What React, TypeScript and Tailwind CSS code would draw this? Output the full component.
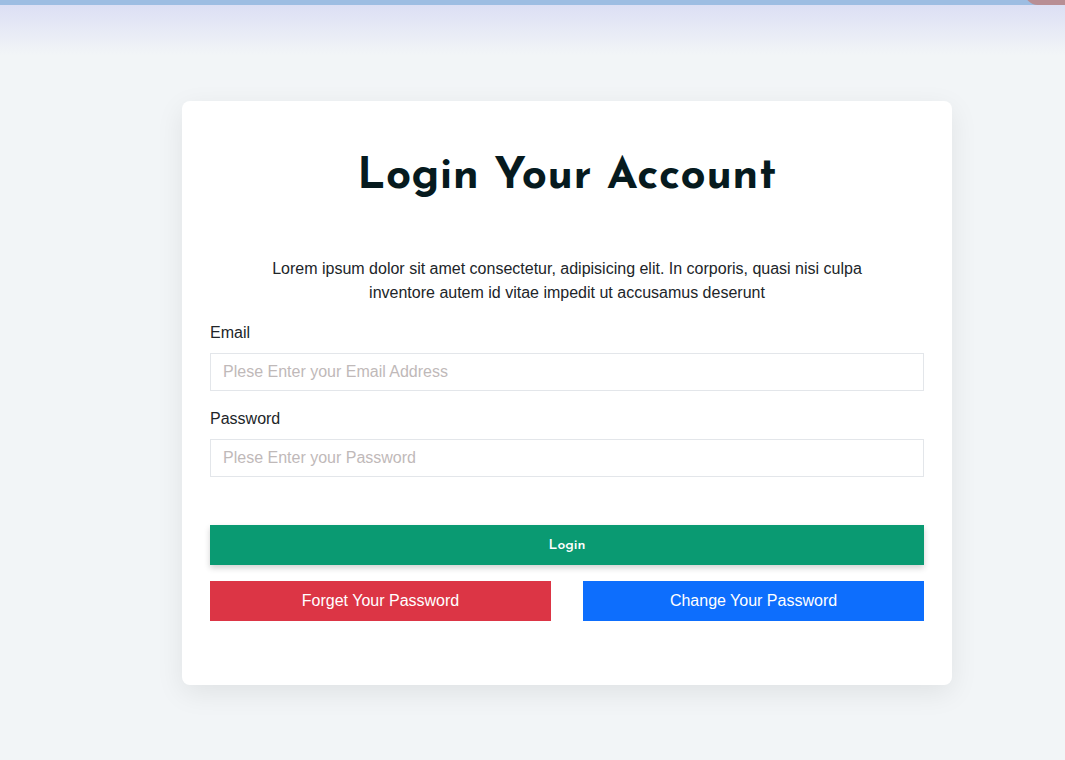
export default function App() {
  return (
    <div
      className="min-h-screen bg-[#f2f5f7] flex flex-col"
      style={{ fontFamily: '"Liberation Sans", Arial, sans-serif' }}
    >
      <div className="relative h-[5px] bg-[#9dbde2] overflow-hidden">
        <div className="absolute right-[-20px] top-[-20px] w-[60px] h-[25px] rounded-full bg-[#b88e94]" />
      </div>
      <div className="h-[50px] bg-gradient-to-b from-[#dcdff4] to-[#f2f5f7]" />

      <div className="flex pl-[182px] pt-[46px] pb-[75px]">
        <div className="w-[770px] bg-white rounded-lg shadow-[0_8px_28px_rgba(0,0,0,0.08)] px-[28px] pt-[50px] pb-[64px]">
          <h1
            className="text-center text-[44px] leading-[52px] font-bold text-[#061a1e] tracking-[0.5px]"
            style={{ fontFamily: '"Josefin Sans", Lato, "Open Sans", sans-serif' }}
          >
            Login Your Account
          </h1>

          <p className="mt-[54px] mx-auto max-w-[600px] text-center text-[16px] leading-[24px] text-[#212529]">
            Lorem ipsum dolor sit amet consectetur, adipisicing elit. In corporis, quasi nisi culpa
            inventore autem id vitae impedit ut accusamus deserunt
          </p>

          <form className="mt-[16px]" onSubmit={(e) => e.preventDefault()}>
            <label className="block text-[16px] leading-[24px] text-[#212529]">Email</label>
            <input
              type="email"
              placeholder="Plese Enter your Email Address"
              className="mt-[8px] block w-full h-[38px] border border-[#e3e6ea] px-[12px] text-[16px] text-[#212529] placeholder:text-[#bfb9b9] outline-none"
            />

            <label className="block mt-[16px] text-[16px] leading-[24px] text-[#212529]">Password</label>
            <input
              type="password"
              placeholder="Plese Enter your Password"
              className="mt-[8px] block w-full h-[38px] border border-[#e3e6ea] px-[12px] text-[16px] text-[#212529] placeholder:text-[#bfb9b9] outline-none"
            />

            <button
              type="submit"
              className="mt-[48px] w-full h-[40px] bg-[#0a9a72] text-white text-[14px] font-semibold shadow-[0_3px_6px_rgba(0,0,0,0.18)]"
              style={{ fontFamily: '"Josefin Sans", Lato, sans-serif' }}
            >
              Login
            </button>

            <div className="mt-[16px] grid grid-cols-2 gap-[32px]">
              <button type="button" className="h-[40px] bg-[#dc3545] text-white text-[16px]">
                Forget Your Password
              </button>
              <button type="button" className="h-[40px] bg-[#0d6efd] text-white text-[16px]">
                Change Your Password
              </button>
            </div>
          </form>
        </div>
      </div>
    </div>
  );
}
